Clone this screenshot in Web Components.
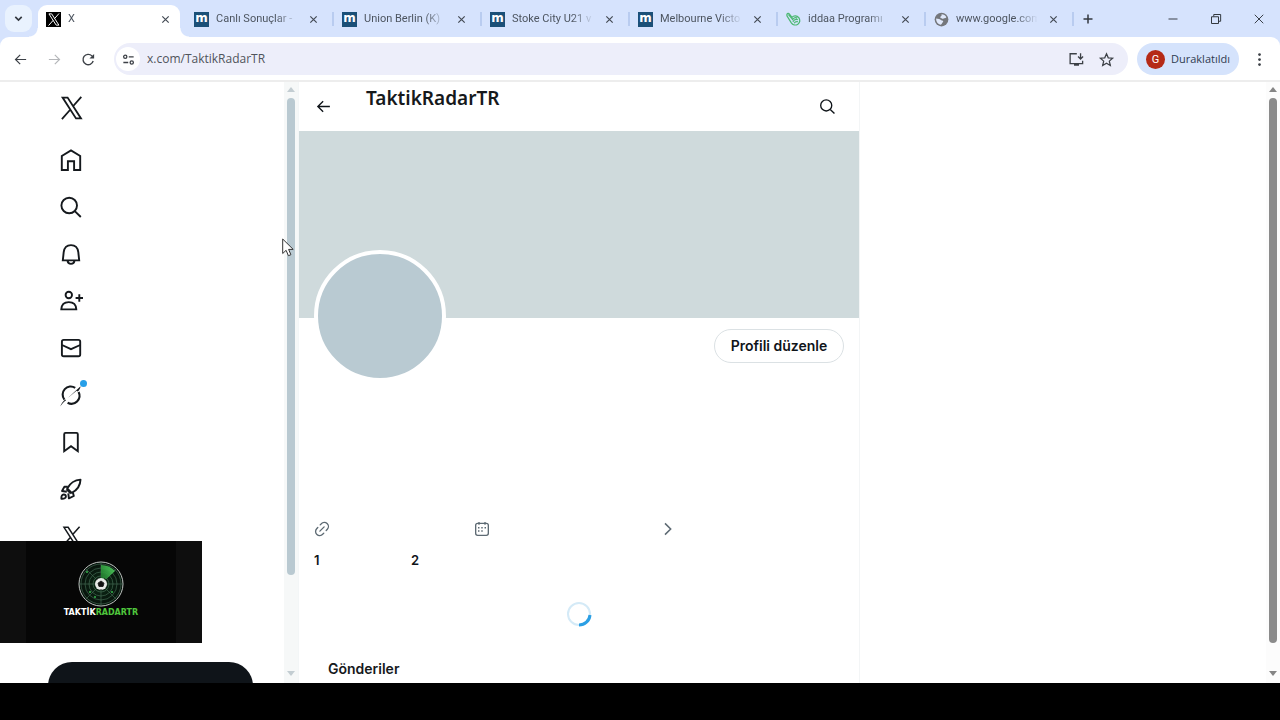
<!DOCTYPE html>
<html lang="tr">
<head>
<meta charset="utf-8">
<title>X</title>
<style>
html, body { margin: 0; height: 100%; }
body { background: #000; color: #0f1419; font-family: Inter, "Noto Sans", sans-serif; overflow: hidden; }
</style>
</head>
<body>
<browser-window>
  <tab-strip slot="chrome">
    <browser-tab label="X" icon="x" active></browser-tab>
    <browser-tab label="Canlı Sonuçlar -" icon="m"></browser-tab>
    <browser-tab label="Union Berlin (K)" icon="m"></browser-tab>
    <browser-tab label="Stoke City U21 v" icon="m"></browser-tab>
    <browser-tab label="Melbourne Victo" icon="m"></browser-tab>
    <browser-tab label="iddaa Programı" icon="hand"></browser-tab>
    <browser-tab label="www.google.com" icon="globe"></browser-tab>
  </tab-strip>
  <tool-bar slot="chrome" url="x.com/TaktikRadarTR" profile="Duraklatıldı"></tool-bar>
  <side-nav></side-nav>
  <scroll-bar style="--thumb:#b9c9d1;--track:#f6f8f8;--arrow:#c3cdd2;--rest:96px"></scroll-bar>
  <profile-page name="TaktikRadarTR"></profile-page>
  <scroll-bar slot="edge" style="--thumb:#8b8b8b;--track:#fcfcfc;--arrow:#858585;--rest:28px"></scroll-bar>
  <channel-badge slot="overlay"></channel-badge>
  <mouse-pointer slot="overlay"></mouse-pointer>
</browser-window>

<script>
const S = 'fill="none" stroke="currentColor"';
const ICONS = {
  x: `<path ${S} stroke-width="1.8" d="M3.6 1.6H8.600L22 22.400H17zM22.300 .8L13.800 10.500M2.900 23.200L11.400 13.500"/>`,
  home: `<path ${S} stroke-width="1.9" d="M2.8 22V8L12 2.4 21.2 8v14h-6.1v-8.7H8.9V22z"/>`,
  search: `<g ${S} stroke-width="1.9"><circle cx="10.2" cy="10.5" r="7.8"/><path d="M15.8 16.1l6 5.9"/></g>`,
  bell: `<g ${S} stroke-width="1.9"><path d="M3.8 18.4l.9-8.2C5.2 5.9 8 3.1 12 3.1s6.8 2.8 7.3 7.1l.9 8.2z"/><path d="M8.5 18.4c.2 2.2 1.6 3.5 3.5 3.5s3.3-1.3 3.5-3.5"/></g>`,
  follow: `<g ${S} stroke-width="1.9"><circle cx="9.8" cy="6" r="3.2"/><path d="M2.3 20.400c.2-4.700 3-7.300 7.500-7.300s7.300 2.600 7.500 7.300zM20.300 5.300v7.400M16.600 9H24"/></g>`,
  mail: `<g ${S} stroke-width="1.9"><rect x="2.900" y="3.900" width="18.300" height="16.400" rx="1.800"/><path d="M3 9l9 4.200L21.200 9"/></g>`,
  grok: `<path ${S} stroke-width="2.1" d="M5.400 16.600A8.100 8.100 0 0 1 16.200 4.800M19.600 9A8.100 8.100 0 0 1 8.600 19.800"/><path fill="currentColor" d="M1.200 23.400C2.500 20.500 4 18.400 6.100 16.600l1 .6C4.800 19 2.900 20.800 1.200 23.400zM8.800 14.900L21.600 3.200c-.4 2.300-1.400 4.200-2.800 5.400l-1.200-.8z"/>`,
  bookmark: `<path ${S} stroke-width="1.9" d="M5.200 21.200V4.200c0-.8.500-1.300 1.300-1.300h11c.8 0 1.300.5 1.300 1.300v17L12 16.200z"/>`,
  rocket: `<g ${S} stroke-width="1.9" stroke-linejoin="round"><path d="M8.200 11.500C11 6.200 15 3 21.500 2.600 21.300 9 18 13.200 12.700 15.900z"/><path d="M8.800 9.800l-3.400 0-2.400 4.200 4.800.8M13.900 15.400l.9 3.600-4.900 2.300-.6-5"/><path d="M7.500 12.300l4.400 4.200"/><path d="M2.400 21.700c-.2-2.700.6-4.200 2.300-4.200 1.500 0 2.200.8 2.200 2 0 1.600-1.500 2.400-4.500 2.200z"/></g>`,
  back: `<path ${S} stroke-width="1.9" d="M21 12H4.500M11.500 4.500L4 12l7.500 7.500"/>`,
  forward: `<path ${S} stroke-width="1.9" d="M3 12h16.500M12.500 4.500L20 12l-7.500 7.500"/>`,
  reload: `<path ${S} stroke-width="2.2" d="M19.500 14.500A8.300 8.300 0 1 1 17.500 6.200l2 2"/><path fill="currentColor" d="M21 3v7.500h-7.500z"/>`,
  tune: `<g ${S} stroke-width="2.4"><circle cx="6" cy="7" r="3"/><circle cx="18" cy="17.5" r="3"/><path d="M12.500 7h9M2.500 17.500h9"/></g>`,
  install: `<path ${S} stroke-width="2.1" d="M12.500 2.800H1.800v15.700h20v-4.500"/><path fill="currentColor" d="M8 19h8v3H8z"/><path ${S} stroke-width="2.100" d="M18.500 2v9M14.500 7.300l4 4 4-4"/>`,
  star: `<path ${S} stroke-width="2" d="M12 2.800l2.800 6.500 7 .6-5.300 4.700 1.600 6.900L12 17.800l-6.100 3.700 1.600-6.900-5.300-4.700 7-.6z"/>`,
  kebab: '<g fill="currentColor"><circle cx="12" cy="4" r="2.200"/><circle cx="12" cy="12" r="2.200"/><circle cx="12" cy="20" r="2.200"/></g>',
  chevdown: `<path ${S} stroke-width="3.6" d="M5 8.500l7 7 7-7"/>`,
  close: `<path ${S} stroke-width="3.2" d="M3.500 3.500l17 17M20.500 3.500l-17 17"/>`,
  plus: `<path ${S} stroke-width="3" d="M12 3v18M3 12h18"/>`,
  min: `<path ${S} stroke-width="1.9" d="M3 12h18"/>`,
  restore: `<path ${S} stroke-width="2" d="M3 7.500h14V21H3zM7.500 7V3h13.800v13.500h-4"/>`,
  closewin: `<path ${S} stroke-width="1.9" d="M3.500 3.500l17 17M20.500 3.500l-17 17"/>`,
  globe: '<circle cx="12" cy="12" r="11" fill="#74777c"/><path fill="#dfe8fb" d="M12 3.500c3.500 0 6.500 2 7.800 5-1 1.500-2.500 2-4 1.500-1 1.500-2.500 1-3.500 0-1.500 0-2.500-1-2-2.500.8-1.400 2.500-1 1.700-4zM3.500 10.500c3 .5 6.500 1 8 2.500 2 .5 4 1 3 3-1.500 1-1.500 3-3.500 4.500-4.500-.5-8-5-7.500-10z"/>',
  hand: '<g fill="none" stroke="#4cb873" stroke-width="2"><path d="M1.500 3.500c1-2 3-1.500 4 0l4 5c3-3.500 8-3 11 .5 2.500 4 1.500 8-1.500 10.500-4 2.500-8.500 1-10.500-2L1.500 6z"/><path d="M4 4l7 8M10 13c2-4 6-5 8-3M11 15.500c2-3.500 5-4.500 8-3M13 18c1-2 3-3 6-2.500"/></g>',
  link: `<g ${S} stroke-width="2" stroke-linecap="round"><path d="M9.300 5.800l1.700-1.700a6 6 0 0 1 9 8.300l-1.700 1.800M14.700 18.200L13 19.900a6 6 0 0 1-9-8.300l1.700-1.800M8.800 15.200l6.400-6.400"/></g>`,
  calendar: `<g ${S} stroke-width="2"><rect x="2.500" y="3.500" width="19" height="18" rx="3"/><path d="M7.500 1.500v4M16.500 1.500v4"/></g><g fill="currentColor"><path d="M6 9h2.200v2.200H6zM10.900 9h2.200v2.200h-2.200zM15.800 9H18v2.200h-2.200zM6 14h2.200v2.200H6zM10.900 14h2.200v2.200h-2.200z"/></g>`,
  chevright: `<path ${S} stroke-width="2.300" d="M7.500 3.500L16 12l-8.500 8.500"/>`
};
const define = (tag, html, setup) => customElements.define(tag, class extends HTMLElement {
  constructor() {
    super();
    this.attachShadow({ mode: 'open' });
  }
  connectedCallback() {
    const t = document.createElement('template');
    t.innerHTML = html;
    this.shadowRoot.replaceChildren(t.content.cloneNode(true));
    if (setup) setup(this, this.shadowRoot);
  }
});
const RESET = '*{box-sizing:border-box}button{appearance:none;border:0;background:none;padding:0;margin:0;color:inherit;font:inherit;display:grid;place-items:center}';

define('ui-icon', '<style>:host{display:block;width:24px;height:24px;flex:none}svg{display:block;width:100%;height:100%;overflow:visible}</style><svg viewBox="0 0 24 24" aria-hidden="true"></svg>',
  (el, root) => { root.querySelector('svg').innerHTML = ICONS[el.getAttribute('name')]; });

define('browser-window', `<style>
:host{display:flex;flex-direction:column;height:100vh;position:relative;overflow:hidden}
main{flex:1;min-height:0;display:flex;background:#fff;overflow:hidden}
.view{flex:1;min-width:0;display:grid;grid-template-columns:284px 14px minmax(0,562px) 1fr;overflow:hidden}
footer{flex:none;height:37px;background:#000}
</style>
<slot name="chrome"></slot>
<main><div class="view"><slot></slot></div><slot name="edge"></slot></main>
<footer></footer>
<slot name="overlay"></slot>`);

define('tab-strip', `<style>${RESET}
:host{display:flex;align-items:center;height:37px;flex:none;background:#d6e3fd;padding-left:5px;color:#33383f}
.list{width:27px;height:27px;border-radius:9px;background:#e9f2fe;margin-right:6px}
.list ui-icon{width:11px;height:11px}
nav{display:flex;flex:0 1 1036px;min-width:0;align-self:stretch}
.new{width:28px;height:28px}.new ui-icon{width:12px;height:12px}
.controls{display:flex;margin-left:auto}
.controls button{width:43px;height:37px}.controls ui-icon{width:12px;height:12px}
</style>
<button class="list" aria-label="Sekmelerde ara"><ui-icon name="chevdown"></ui-icon></button>
<nav><slot></slot></nav>
<button class="new" aria-label="Yeni sekme"><ui-icon name="plus"></ui-icon></button>
<div class="controls">
<button aria-label="Küçült"><ui-icon name="min"></ui-icon></button>
<button aria-label="Geri yükle"><ui-icon name="restore"></ui-icon></button>
<button aria-label="Kapat"><ui-icon name="closewin"></ui-icon></button></div>`);

define('browser-tab', `<style>${RESET}
:host{display:flex;align-items:center;flex:1 1 148px;min-width:0;position:relative;padding:5px 12px 4px 8px;gap:8px;font:11px/16px "Noto Sans","Open Sans",sans-serif;font-family:Roboto,"Noto Sans",sans-serif;color:#4d5560}
.tab{flex:1;min-width:0;display:flex;align-items:center;gap:7px;position:relative}
.icon{width:15px;height:15px;flex:none;display:grid;place-items:center}
.icon ui-icon{width:15px;height:15px}
.m{background:#1b5078;color:#fff;font:bold 12px/12px "DejaVu Sans",sans-serif;padding-bottom:2px}
.x{background:#000;color:#fff}.x ui-icon{width:13px;height:13px}
.title{flex:1;min-width:0;text-align:left;white-space:pre;overflow:hidden;-webkit-mask-image:linear-gradient(90deg,#000 60px,transparent 82px);mask-image:linear-gradient(90deg,#000 60px,transparent 82px)}
.close{width:17px;height:17px;position:relative;color:#444b55}.close ui-icon{width:9px;height:9px}
.sep{position:absolute;right:0;top:12px;width:2px;height:14px;background:#b9ccf0}
:host([active]) .sep{display:none}
.shape{display:none}
:host([active]) .shape{display:block;position:absolute;top:5px;bottom:0;left:0;right:6px;background:#fff;border-radius:9px 9px 0 0}
.shape::before,.shape::after{content:"";position:absolute;bottom:0;width:9px;height:9px}
.shape::before{right:100%;background:radial-gradient(circle at 0 0,transparent 8px,#fff 9px)}
.shape::after{left:100%;background:radial-gradient(circle at 100% 0,transparent 8px,#fff 9px)}
</style>
<span class="shape"></span>
<button class="tab" role="tab"><span class="icon"></span><span class="title"></span></button>
<button class="close" aria-label="Sekmeyi kapat"><ui-icon name="close"></ui-icon></button>
<span class="sep"></span>`, (el, root) => {
  const kind = el.getAttribute('icon'), icon = root.querySelector('.icon');
  icon.classList.add(kind);
  icon.innerHTML = kind === 'm' ? 'm' : `<ui-icon name="${kind}"></ui-icon>`;
  root.querySelector('.title').textContent = el.getAttribute('label');
});

define('tool-bar', `<style>${RESET}
:host{display:block;flex:none;background:#d6e3fd;font-family:"Open Sans","Noto Sans",sans-serif}
.bar{display:flex;align-items:center;height:45px;padding:1px 9px 0 8px;background:#fff;border-bottom:2px solid #ededed;border-radius:9px 9px 0 0;color:#3c4046}
.nav{display:flex;gap:10px;margin-right:14px}
.nav button{width:24px;height:24px}.nav ui-icon{width:15px;height:15px}
.off{color:#b5b7ba}
form{flex:1;min-width:0;height:32px;display:flex;align-items:center;background:#edeefa;border-radius:16px;padding:0 12px 0 2px;margin:0}
.site{width:24px;height:24px;border-radius:50%;background:#fff;flex:none}.site ui-icon{width:13px;height:13px}
input{flex:1;min-width:0;border:0;background:none;outline:0;padding:0;margin-left:7px;font:12px/18px "Open Sans","Noto Sans",sans-serif;color:#50545b}
.act{width:20px;height:20px;margin-left:10px}.act ui-icon{width:15px;height:15px}
.profile{display:flex;align-items:center;gap:6px;width:102px;height:32px;margin:0 8px 0 9px;padding-left:9px;border-radius:16px;background:#d5e3fc;font-size:11px;line-height:16px;color:#2f3b50;white-space:nowrap}
.g{width:19px;height:19px;border-radius:50%;background:#b52a17;color:#fff;font:11px/19px Roboto,sans-serif;text-align:center}
.more{width:24px;height:24px}.more ui-icon{width:15px;height:15px}
</style>
<div class="bar">
<div class="nav"><button aria-label="Geri"><ui-icon name="back"></ui-icon></button><button class="off" aria-label="İleri"><ui-icon name="forward"></ui-icon></button><button aria-label="Yenile"><ui-icon name="reload"></ui-icon></button></div>
<form><button type="button" class="site" aria-label="Site bilgileri"><ui-icon name="tune"></ui-icon></button><input type="text" aria-label="Adres çubuğu">
<button type="button" class="act" aria-label="Yükle"><ui-icon name="install"></ui-icon></button><button type="button" class="act" aria-label="Yer işareti"><ui-icon name="star"></ui-icon></button></form>
<button class="profile"><span class="g">G</span><span class="label"></span></button>
<button class="more" aria-label="Menü"><ui-icon name="kebab"></ui-icon></button>
</div>`, (el, root) => {
  root.querySelector('input').value = el.getAttribute('url');
  root.querySelector('.label').textContent = el.getAttribute('profile');
});

define('scroll-bar', `<style>
:host{display:flex;flex-direction:column;align-items:center;width:14px;flex:none;background:var(--track);padding:5px 0 7px;box-sizing:border-box;min-height:0}
i{flex:none;border:4px solid transparent}
.up{border-bottom:5px solid var(--arrow);border-top:0;margin-bottom:6px}
.thumb{flex:1;width:8px;background:var(--thumb);border-radius:4px}
.down{border-top:5px solid var(--arrow);border-bottom:0;margin-top:var(--rest)}
</style><i class="up"></i><div class="thumb"></div><i class="down"></i>`);

define('side-nav', `<style>${RESET}
:host{display:block;overflow:hidden;min-height:0}
nav{display:flex;flex-direction:column;padding-left:59px}
a{display:flex;align-items:center;height:47px;color:#15191d}
a.logo{height:52px;margin-bottom:2px}
.wrap{position:relative}
.dot{position:absolute;width:7px;height:7px;border-radius:50%;background:#279fe8;right:-4px;top:-3px}
.post{width:205px;height:48px;border-radius:24px;background:#0f1419;margin:103px 0 0 48px}
a.premium ui-icon{width:20px;height:20px;margin:0 2px}
</style>
<nav></nav><button class="post" aria-label="Gönder"></button>`, (el, root) => {
  const items = [['x', 'X', 'logo'], ['home', 'Anasayfa'], ['search', 'Keşfet'], ['bell', 'Bildirimler'], ['follow', 'Takip et'], ['mail', 'Sohbet'], ['grok', 'Grok'], ['bookmark', 'Yer işaretleri'], ['rocket', 'Stüdyo'], ['x', 'Premium', 'premium']];
  root.querySelector('nav').innerHTML = items.map(([i, l, c = '']) =>
    `<a href="#${i}" class="${c}" aria-label="${l}"><span class="wrap"><ui-icon name="${i}"></ui-icon>${i === 'grok' ? '<span class="dot"></span>' : ''}</span></a>`).join('');
});

define('profile-page', `<style>${RESET}
:host{display:block;border-left:1px solid #f3f6f7;border-right:1px solid #f3f5f6;overflow:hidden;min-height:0}
header{height:49px;display:flex;align-items:center;padding:0 23px 0 16px}
header button ui-icon{width:17px;height:17px}
h1{flex:1;align-self:flex-start;margin:4px 0 0 34px;font:600 19px/25px "Noto Sans","Open Sans",sans-serif;color:#16191c}
.banner{height:187px;background:#cfdadc}
.top{display:flex;justify-content:space-between;align-items:flex-start;padding:0 15px;height:197px}
.avatar{width:132px;height:132px;border:4px solid #fff;border-radius:50%;background:#b9cad2;margin-top:-68px;position:relative}
.edit{height:34px;width:130px;margin-top:11px;border:1px solid #dbe1e4;border-radius:17px;font:600 14px/18px Inter,"Noto Sans",sans-serif;color:#0f1419;white-space:nowrap}
.meta{display:grid;grid-template-columns:160px 186px auto;justify-content:start;align-items:center;height:28px;padding-left:15px;color:#5d6a73}
.meta ui-icon{width:16px;height:16px}
.counts{display:grid;grid-template-columns:97px auto;justify-content:start;padding:8px 0 0 15px;font:600 13px/18px Inter,"Noto Sans",sans-serif}
.counts a{color:inherit;text-decoration:none}
.load{display:grid;place-items:center;height:90px}
.load svg{width:26px;height:26px;display:block}
h2{margin:0 0 0 29px;font:600 14px/20px Inter,"Noto Sans",sans-serif;color:#16191c}
</style>
<header><button aria-label="Geri"><ui-icon name="back"></ui-icon></button><h1></h1><button aria-label="Ara"><ui-icon name="search"></ui-icon></button></header>
<div class="banner"></div>
<div class="top"><div class="avatar"></div><button class="edit">Profili düzenle</button></div>
<div class="meta"><ui-icon name="link"></ui-icon><ui-icon name="calendar"></ui-icon><ui-icon name="chevright"></ui-icon></div>
<div class="counts"><a href="#following">1</a><a href="#followers">2</a></div>
<div class="load" role="progressbar" aria-label="Yükleniyor"><svg viewBox="0 0 26 26"><circle cx="13" cy="13" r="11" fill="none" stroke="#d4eaf7" stroke-width="2"/><path d="M24 14A11 11 0 0 1 13 24" fill="none" stroke="#2b9fe4" stroke-width="3"/></svg></div>
<h2>Gönderiler</h2>`, (el, root) => { root.querySelector('h1').textContent = el.getAttribute('name'); });

define('channel-badge', `<style>
:host{position:absolute;left:0;bottom:77px;width:202px;height:102px;box-sizing:border-box;padding-top:20px;background:linear-gradient(90deg,#0e0e0e 26px,#060606 26px 176px,#0e0e0e 176px);display:flex;flex-direction:column;align-items:center}
svg{width:46px;height:46px;display:block}
p{margin:0;font:bold 8px/12px "DejaVu Sans",sans-serif;color:#fff;white-space:nowrap}
b{color:#4fc63c}
</style>
<svg viewBox="0 0 46 46"><defs><radialGradient id="d"><stop offset="0" stop-color="#0d2c17"/><stop offset="1" stop-color="#07110b"/></radialGradient><linearGradient id="w" x1="0" y1="1" x2="1" y2="0"><stop offset="0" stop-color="#12641f"/><stop offset="1" stop-color="#58e067"/></linearGradient></defs>
<circle cx="23" cy="23" r="22" fill="url(#d)" stroke="#bfc4c1" stroke-width="1"/>
<g fill="none" stroke="#49745a" stroke-width=".6"><circle cx="23" cy="23" r="20"/><circle cx="23" cy="23" r="16"/><circle cx="23" cy="23" r="12"/><circle cx="23" cy="23" r="8"/><path d="M23 1v44M1 23h44M8 8l30 30M8 38L38 8"/></g>
<path d="M23 23V4a19 19 0 0 1 14 6z" fill="url(#w)" opacity=".9"/>
<g fill="#35b64b"><circle cx="9" cy="11" r="1"/><circle cx="12" cy="31" r="1"/><circle cx="34" cy="31" r="1"/><circle cx="17" cy="36" r="1"/></g>
<circle cx="23" cy="23" r="6" fill="#e8ebe8"/><path d="M23 20l3 2.200-1 3.300h-4l-1-3.300zM18 19l2-1.600M26 17.400l2 1.600M23 28v1" fill="#111" stroke="#222"/></svg>
<p>TAKTİK<b>RADARTR</b></p>`);

define('mouse-pointer', `<style>:host{position:absolute;left:282px;top:238px;width:12px;height:19px}svg{display:block}</style>
<svg width="12" height="19" viewBox="0 0 12 19"><path d="M.7 1v14.500l3.400-3.200 2.300 5.400 2.500-1-2.300-5.300h4.600z" fill="#fff" stroke="#333" stroke-width="1"/></svg>`);
</script>
</body>
</html>
